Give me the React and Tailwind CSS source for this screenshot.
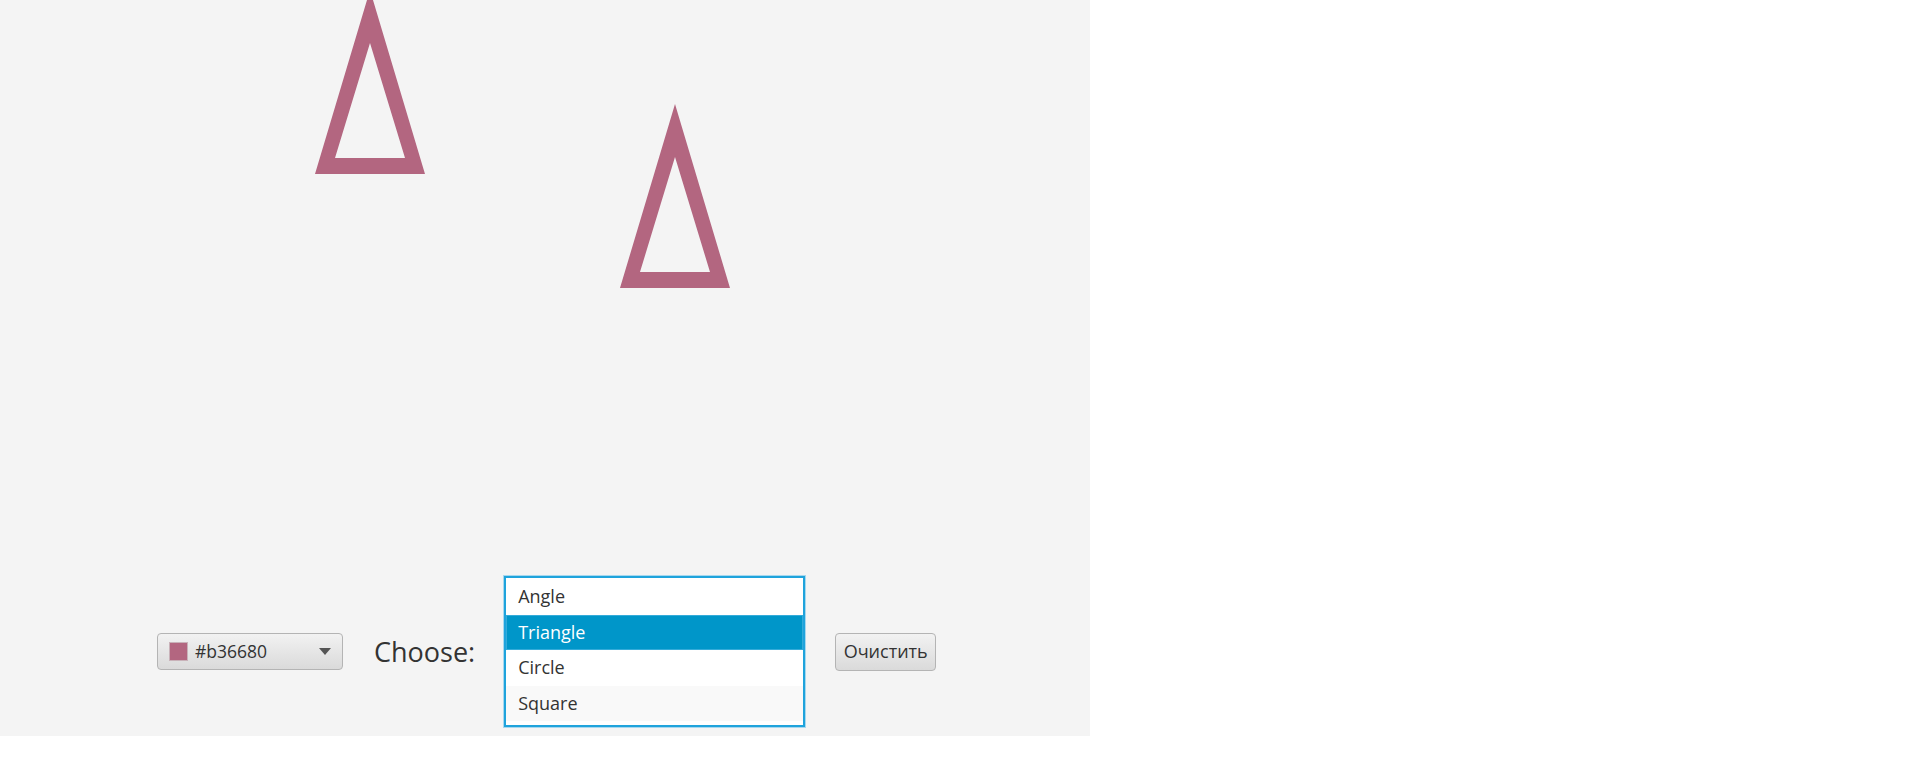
import React from "react";

export default function App() {
  const items = ["Angle", "Triangle", "Circle", "Square"];
  return (
    <div className="w-[1914px] h-[778px] bg-white" style={{ fontFamily: '"Open Sans", "Noto Sans", sans-serif' }}>
      <div className="relative w-[1090px] h-[736px] bg-[#f4f4f4] flex flex-col">
        <svg className="absolute left-0 top-0" width="1090" height="736" viewBox="0 0 1090 736">
          <path
            fillRule="evenodd"
            fill="#b36680"
            d="M370 -10 L315 174 L425 174 Z M370 43 L335 158 L405 158 Z"
          />
          <path
            fillRule="evenodd"
            fill="#b36680"
            d="M675 104 L620 288 L730 288 Z M675 157 L640 272 L710 272 Z"
          />
        </svg>
        <div className="flex-1" />
        <div className="relative flex items-center pl-[157px] pb-[9px]">
          <div className="flex items-center w-[186px] h-[37px] rounded-[4px] border border-[#b4b4b4] bg-gradient-to-b from-[#f2f2f2] to-[#dadada] pl-[11px] pr-[11px]">
            <div className="w-[19px] h-[19px] bg-[#b36680] border border-[#c9b2b9]" />
            <span className="ml-[7px] text-[17.5px] text-[#333]">#b36680</span>
            <div className="flex-1" />
            <div className="w-0 h-0 border-l-[6px] border-r-[6px] border-t-[7px] border-l-transparent border-r-transparent border-t-[#555]" />
          </div>
          <span className="ml-[31px] text-[27px] text-[#333] leading-none">Choose:</span>
          <div className="ml-[29px] w-[301px] h-[151px] border-2 border-[#1fa3dc] shadow-[0_0_0_1px_#a6d8ef] bg-white flex flex-col py-[1px]">
            {items.map((it, i) => (
              <div
                key={it}
                className={
                  i === 1
                    ? "h-[35.5px] flex items-center pl-[11px] bg-[#0096c9] border border-[#34abd9] text-white text-[18px]"
                    : i === 3
                    ? "h-[35.5px] flex items-center pl-[12px] bg-[#f9f9f9] text-[#333] text-[18px]"
                    : "h-[35.5px] flex items-center pl-[12px] bg-white text-[#333] text-[18px]"
                }
              >
                {it}
              </div>
            ))}
          </div>
          <div className="ml-[30px] w-[101px] h-[38px] rounded-[4px] border border-[#b4b4b4] bg-gradient-to-b from-[#f2f2f2] to-[#dadada] flex items-center justify-center text-[18px] text-[#333]">
            Очистить
          </div>
        </div>
      </div>
    </div>
  );
}
